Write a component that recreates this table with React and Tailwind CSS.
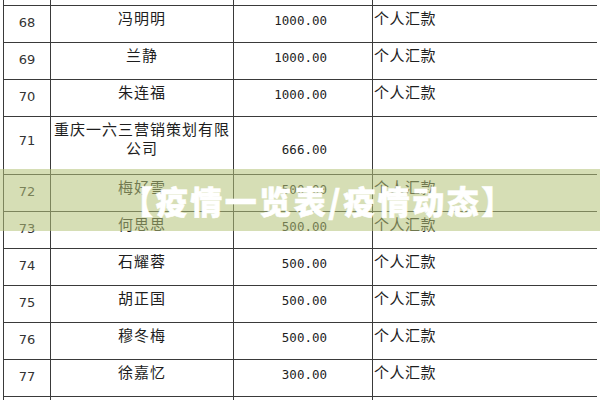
import React from 'react';

const rows = [
    { no: '67', name: '刘小兵', amount: '1000.00', note: '个人汇款' },
    { no: '68', name: '冯明明', amount: '1000.00', note: '个人汇款' },
    { no: '69', name: '兰静', amount: '1000.00', note: '个人汇款' },
    { no: '70', name: '朱连福', amount: '1000.00', note: '个人汇款' },
    { no: '71', name: '重庆一六三营销策划有限公司', amount: '666.00', note: '', tall: true },
    { no: '72', name: '梅好雪', amount: '500.00', note: '个人汇款' },
    { no: '73', name: '何思思', amount: '500.00', note: '个人汇款' },
    { no: '74', name: '石耀蓉', amount: '500.00', note: '个人汇款' },
    { no: '75', name: '胡正国', amount: '500.00', note: '个人汇款' },
    { no: '76', name: '穆冬梅', amount: '500.00', note: '个人汇款' },
    { no: '77', name: '徐嘉忆', amount: '300.00', note: '个人汇款' },
    { no: '78', name: '杨林', amount: '300.00', note: '个人汇款' },
];

// cjk text uses Noto Sans CJK SC, numbers DejaVu
const Row = ({ row }) => (
    <div
        className={`grid grid-cols-[47px_183px_139px_225px] ${row.tall ? 'h-[58px]' : 'h-[37px]'} border-b border-[#3a3a3a] text-[#1e1e1e]`}
    >
        <div
            className={`border-r border-[#3a3a3a] flex justify-center text-[13px] text-[#333] font-['DejaVu_Sans',sans-serif] ${row.tall ? 'items-center pb-[10px]' : 'items-start pt-[7px]'}`}
        >
            {row.no}
        </div>
        <div className="border-r border-[#3a3a3a] px-[2px] pt-[2px] text-center text-[15px] leading-[19px] tracking-[1px] font-['Noto_Sans_CJK_SC',sans-serif]">
            {row.tall ? (
                <>
                    重庆一六三营销策划有限
                    <br />
                    公司
                </>
            ) : (
                row.name
            )}
        </div>
        <div
            className={`border-r border-[#3a3a3a] flex justify-end items-start pr-[45px] text-[12.5px] font-['DejaVu_Sans_Mono',monospace] ${row.tall ? 'pt-[24px]' : 'pt-[6px]'}`}
        >
            {row.amount}
        </div>
        <div className="pl-[1px] pt-[2px] text-[15px] leading-[20px] tracking-[0.5px] font-['Noto_Sans_CJK_SC',sans-serif]">
            {row.note}
        </div>
    </div>
);

const App = () => {
    return (
        <div className="relative w-[600px] h-[400px] overflow-hidden bg-white">
            <div className="ml-[3px] w-[594px] -mt-[31px] border-l border-[#3a3a3a]">
                {rows.map((r) => (
                    <Row key={r.no} row={r} />
                ))}
            </div>

            <div className="absolute left-0 top-[169px] w-full h-[62px] bg-[rgba(180,195,120,0.55)] flex items-center justify-center pl-[37px]">
                <span className="text-white text-[32px] font-black tracking-[2.5px] leading-none [-webkit-text-stroke:0.5px_white] font-['Noto_Sans_CJK_SC',sans-serif]">
                    【疫情一览表/疫情动态】
                </span>
            </div>
        </div>
    );
};

export default App;
